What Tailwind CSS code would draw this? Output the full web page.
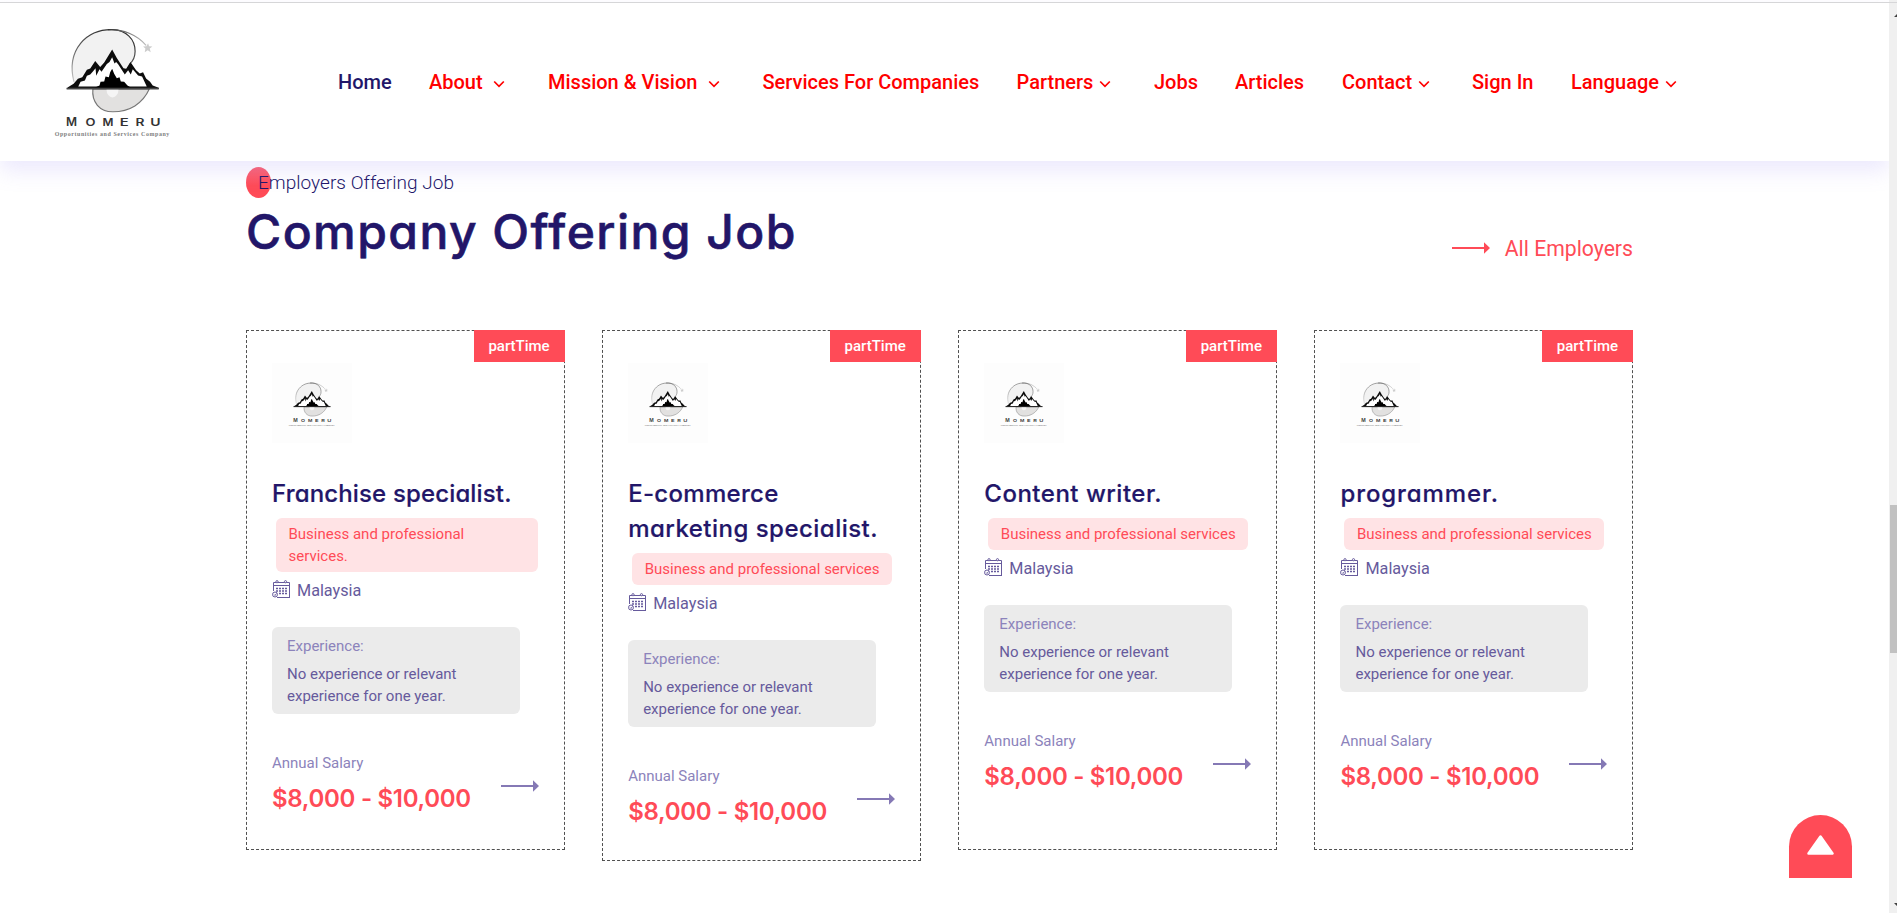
<!DOCTYPE html>
<html lang="en">
<head>
<meta charset="utf-8">
<title>Momeru</title>
<script src="https://cdn.jsdelivr.net/npm/@tailwindcss/browser@4"></script>
</head>
<body class="h-[913px] overflow-hidden bg-white font-[Roboto,sans-serif]">

<svg class="absolute h-0 w-0">
  <defs>
    <linearGradient id="ring" x1="0" y1="1" x2="0.5" y2="0"><stop offset="0" stop-color="#ccc"/><stop offset=".5" stop-color="#666"/><stop offset="1" stop-color="#333"/></linearGradient>
    <linearGradient id="tail" x1="0" y1="0" x2="1" y2="0"><stop offset="0" stop-color="#333"/><stop offset="1" stop-color="#bbb"/></linearGradient>
    <symbol id="logo" viewBox="160 80 355 335">
      <path d="M223 244C212 200 217 160 243 128C270 96 305 86 340 87C380 89 407 115 407 152C407 170 400 182 391 190L450 262H225Z" fill="#f2f2f2"/>
      <path d="M223 244C212 200 217 160 243 128C270 96 305 86 340 87C380 89 407 115 407 152C407 170 400 182 391 190" fill="none" stroke="url(#ring)" stroke-width="3.5"/>
      <path d="M325 87C370 84 413 103 440 134" fill="none" stroke="url(#tail)" stroke-width="3.5"/>
      <path d="M446 128l3 9 10 1-8 6 3 11-9-6-9 6 2-11-7-6 10-1z" fill="#ccc"/>
      <path d="M280 265C276 305 300 334 340 334C390 334 430 310 450 265Z" fill="#e2e1e0" stroke="#777" stroke-width="3.5"/>
      <path d="M321 267a18 24 0 0 0 36 0z" fill="#f5f5f5"/>
      <path d="M203 263L232 240L262 210L287 183L301 200L338 150L374 209L394 185L412 212L432 219L448 240L476 263Z" fill="#fff"/>
      <path d="M201 265L205 260L222 250L235 235L248 230L262 208L272 204L287 181L302 199L314 186L338 147L352 172L372 203L380 205L393 184L410 209L421 219L431 215L440 234L452 244L460 255L478 262V266H201ZM236 258L442 258L428 228L416 225L400 206L394 222L386 209L376 222L356 191L350 184L345 189L338 170L330 184L322 190L306 214L300 206L290 226L288 203L280 213L272 222L262 226L256 240L243 244Z" fill="#0c0c0c" fill-rule="evenodd"/>
      <path d="M285 262L300 255L303 244L314 243L318 228L328 230L332 215L338 205L344 220L352 233L360 230L364 243L374 244L384 255L395 262Z" fill="#000"/>
      <path d="M201 264H478" stroke="#444" stroke-width="5"/>
      <text y="378" font-family="Inter, sans-serif" font-weight="600" font-size="30" fill="#333"><tspan x="199" font-size="36">M</tspan><tspan x="258" textLength="30" lengthAdjust="spacingAndGlyphs">O</tspan><tspan x="309" textLength="33" lengthAdjust="spacingAndGlyphs">M</tspan><tspan x="361" textLength="27" lengthAdjust="spacingAndGlyphs">E</tspan><tspan x="408" textLength="27" lengthAdjust="spacingAndGlyphs">R</tspan><tspan x="453" textLength="31" lengthAdjust="spacingAndGlyphs">U</tspan></text>
      <text x="165" y="408" textLength="345" lengthAdjust="spacing" font-family="Liberation Serif, serif" font-size="18" font-weight="700" fill="#808080">Opportunities and Services Company</text>
    </symbol>
    <symbol id="chev" viewBox="0 0 12 12"><path d="M1.2 3.5L6 8.4L10.8 3.5" fill="none" stroke="currentColor" stroke-width="1.7"/></symbol>
    <symbol id="arrow" viewBox="0 0 38 12"><path d="M0 5H32V0.3L38 6L32 11.7V7H0Z" fill="currentColor"/></symbol>
    <symbol id="cal" viewBox="0 0 18 18">
      <g fill="none" stroke="currentColor" stroke-width="1">
        <path d="M1.5 11V2.5H17.5V17M1.5 5.5H17.5M5 17.500H18" />
        <circle cx="5" cy="1.700" r="1.100" fill="#fff"/><circle cx="13.500" cy="1.700" r="1.100" fill="#fff"/>
        <circle cx="3" cy="14.500" r="2.500"/><path d="M2 14.500l1 1 1.500-2"/>
        <path d="M4 8.500H16M4 11H16M7 13.500H16" stroke-width="1.500" stroke-dasharray="2 1"/>
      </g>
    </symbol>
  </defs>
</svg>

<div class="flex h-full">
  <div class="flex w-[1889px] flex-col overflow-hidden pt-[2px]">
    <header class="relative z-10 flex h-[159px] shrink-0 items-start border-t border-[#d6d6d8] bg-white shadow-[0_10px_20px_rgba(140,125,245,0.17)]">
      <svg class="ml-[53px] mt-[24px] h-[112px] w-[118px]"><use href="#logo"/></svg>
      <nav class="ml-[167px] mt-[64px] flex text-xl leading-[30px] font-medium whitespace-nowrap text-[#ff0000]">
        <a class="w-[91px] text-[#221669]">Home</a>
        <a class="flex w-[119px] items-center gap-[10px]">About<svg class="mt-[3px] size-3"><use href="#chev"/></svg></a>
        <a class="flex w-[214.500px] items-center gap-[11px]">Mission &amp; Vision<svg class="mt-[3px] size-3"><use href="#chev"/></svg></a>
        <a class="w-[254px]">Services For Companies</a>
        <a class="flex w-[137.500px] items-center gap-[6px]">Partners<svg class="mt-[3px] size-3"><use href="#chev"/></svg></a>
        <a class="w-[81px]">Jobs</a>
        <a class="w-[107px]">Articles</a>
        <a class="flex w-[130px] items-center gap-[6px]">Contact<svg class="mt-[3px] size-3"><use href="#chev"/></svg></a>
        <a class="w-[99px]">Sign In</a>
        <a class="flex items-center gap-[6px]">Language<svg class="mt-[3px] size-3"><use href="#chev"/></svg></a>
      </nav>
    </header>

    <main class="ml-[246px] w-[1387px]">
      <div class="flex h-[169px] justify-between">
        <div>
          <div class="relative mt-[6px] h-[31px] pl-[12px] text-[19px] leading-[31px] font-light text-[#221669]">
            <span class="absolute top-0 left-0 h-[31px] w-[25px] rounded-[50%] bg-linear-to-b from-[#fc6475] to-[#ff4b57] to-60%"></span>
            <span class="relative tracking-[0.030px]">Employers Offering Job</span>
          </div>
          <h2 class="mt-[4px] text-[48px] leading-[60px] font-medium tracking-[1.450px] text-[#221669] font-[Inter,sans-serif] [-webkit-text-stroke:0.6px_#221669]" style="font-feature-settings:'cv11'">Company Offering Job</h2>
        </div>
        <a class="mt-[72px] flex h-[32px] items-center gap-[15px] text-[21.2px] leading-[32px] text-[#ff4b57]"><svg class="-mt-[2px] h-3 w-[38px]"><use href="#arrow"/></svg>All Employers</a>
      </div>
      <div id="cards" class="grid grid-cols-[repeat(4,318.500px)] items-start justify-between"></div>
    </main>
  </div>

  <div class="relative w-2 bg-[#f0f0f0] pt-[2px]">
    <div class="h-px bg-[#d6d6d8]"></div>
    <div class="mt-[502px] ml-px h-[148px] bg-[#c1c1c1]"></div>
    <svg class="absolute top-[3px] left-0 h-[910px] w-2 text-[#404040]"><path d="M5 14L8 11V14ZM5 900H8V903Z" fill="currentColor"/></svg>
  </div>
</div>

<a class="absolute top-[815px] left-[1789px] z-20 flex h-[63px] w-[63px] justify-center rounded-t-full bg-[#ff4b57] pt-[20px]">
  <svg class="h-[20px] w-[27px]" viewBox="0 0 27 20"><path d="M13.500 1.500L25.500 18.500H1.500Z" fill="#fff" stroke="#fff" stroke-width="2.500" stroke-linejoin="round"/></svg>
</a>

<template id="card">
  <article class="relative min-h-[520px] border border-dashed border-[#505050] px-[25px] pt-[32px] pb-[31px]">
    <span class="absolute -top-px -right-px h-[32px] w-[91px] bg-[#ff4b57] text-center text-[15px] leading-[32px] font-medium text-white">partTime</span>
    <div class="size-[80px] bg-[#fdfdfd] pt-[19px] pl-[16px]"><svg class="h-[45px] w-[47.500px]"><use href="#logo"/></svg></div>
    <h3 class="mt-[33px] text-[24px] leading-[35px] font-medium text-[#221669] font-[Inter,sans-serif] whitespace-nowrap [-webkit-text-stroke:0.2px_#221669]" style="font-feature-settings:'cv11'"></h3>
    <div class="mt-[7px] flex pl-[4px]"><span data-tag class="rounded-[6px] bg-[#ffe3e5] px-[12.500px] py-[5px] text-[15px] leading-[22px] text-[#ff4b57]"></span></div>
    <div class="mt-[6px] flex h-[24px] items-center gap-[7px] pt-[2px] text-[16.200px] text-[#665a9c]"><svg class="-mt-[4px] size-[18px]"><use href="#cal"/></svg>Malaysia</div>
    <div class="mt-[25px] h-[87px] w-[248px] rounded-[6px] bg-[#ebebeb] px-[15px] pt-[8px] text-[15px] leading-[22px] text-[#665a9c]">
      <p class="mb-[6px] text-[#8c83bb]">Experience:</p>
      <p>No experience or relevant<br>experience for one year.</p>
    </div>
    <div class="mt-[38px] flex items-center justify-between">
      <div>
        <p class="text-[15px] leading-[22px] text-[#8c83bb]">Annual Salary</p>
        <p class="mt-[7px] text-[24px] leading-[35px] font-semibold tracking-[-0.300px] whitespace-nowrap text-[#ff4b57] font-[Inter,sans-serif]">$8,000 - $10,000</p>
      </div>
      <svg class="mt-[3px] h-3 w-[38px] text-[#8579b5]"><use href="#arrow"/></svg>
    </div>
  </article>
</template>
<script>
const jobs = [
  { title: [['Franchise specialist.', 0.15]], tag: 'Business and professional services.' },
  { title: [['E-commerce', 0.3], ['marketing specialist.', 0.48]], tag: 'Business and professional services' },
  { title: [['Content writer.', 0.5]], tag: 'Business and professional services' },
  { title: [['programmer.', 0.9]], tag: 'Business and professional services' }
];
for (const job of jobs) {
  const card = document.getElementById('card').content.cloneNode(true);
  for (const [line, spacing] of job.title) {
    const s = document.createElement('span');
    s.className = 'block';
    s.style.letterSpacing = spacing + 'px';
    s.textContent = line;
    card.querySelector('h3').append(s);
  }
  card.querySelector('[data-tag]').textContent = job.tag;
  if (job.tag.endsWith('.')) card.querySelector('[data-tag]').classList.add('w-[262px]', 'pr-[40px]');
  document.getElementById('cards').append(card);
}
</script>
</body>
</html>
